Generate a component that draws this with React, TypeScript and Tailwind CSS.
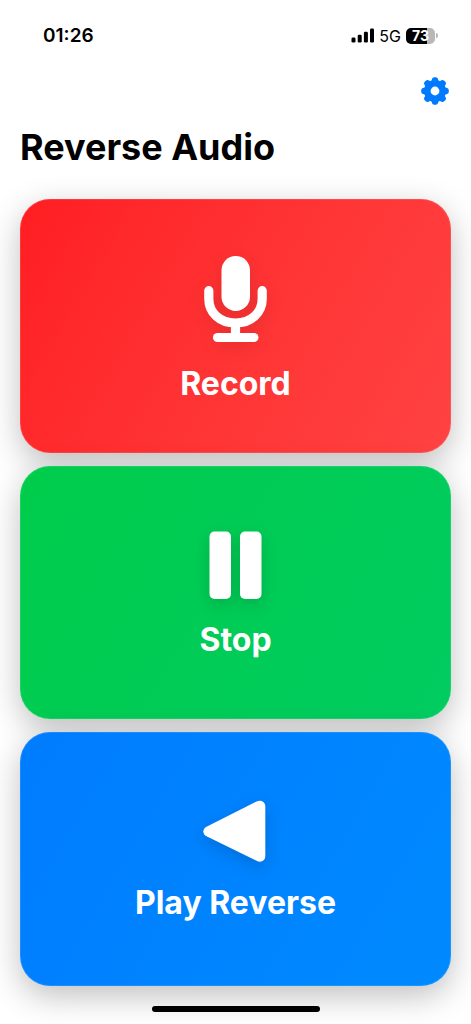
import type { ReactNode } from "react"
import clsx from "clsx"

interface ActionCardProps {
  label: string
  className: string
  children: ReactNode
}

function ActionCard({ label, className, children }: ActionCardProps) {
  return (
    <button
      type="button"
      className={clsx(
        "flex min-h-48 w-full flex-col items-center justify-center gap-3 rounded-[30px] bg-linear-120 text-white shadow-[0_10px_32px_rgba(0,0,0,0.25),inset_0_0_0_1px_rgba(255,255,255,0.1)]",
        className
      )}
    >
      {children}
      <span className="text-[32px] leading-10 font-bold">{label}</span>
    </button>
  )
}

function MicIcon() {
  return (
    <svg viewBox="0 0 64 104" className="h-[104px] w-16 overflow-visible drop-shadow-[0_5px_8px_rgba(0,0,0,0.1)]" fill="none" aria-hidden="true">
      <rect x="17.5" y="8" width="28.5" height="55" rx="14.2" fill="currentColor" />
      <path
        d="M4.8 42.7v8c0 14 11 24.3 26.7 24.3s26.7-10.3 26.7-24.3v-8M31.5 75v14"
        stroke="currentColor"
        strokeWidth="9.2"
        strokeLinecap="round"
      />
      <path d="M13.5 89.500h36.4" stroke="currentColor" strokeWidth="9.2" strokeLinecap="round" />
    </svg>
  )
}

function PauseIcon() {
  return (
    <svg viewBox="0 0 54 84" className="h-[84px] w-[54px] overflow-visible drop-shadow-[0_5px_8px_rgba(0,0,0,0.15)]" fill="currentColor" aria-hidden="true">
      <rect x="0.5" y="7.5" width="21.5" height="67.5" rx="5" />
      <rect x="31" y="7.5" width="21.5" height="67.5" rx="5" />
    </svg>
  )
}

function PlayReverseIcon() {
  return (
    <svg viewBox="0 0 64 76" className="h-[76px] w-16 overflow-visible drop-shadow-[0_5px_8px_rgba(0,0,0,0.15)]" fill="currentColor" aria-hidden="true">
      <path d="M3 31.5 52.500 6.600c4.500-2.200 8.800 0.300 8.800 5v49.200c0 5-4.300 7.200-8.800 5L3 41.500c-5-2.700-5-7.300 0-10Z" />
    </svg>
  )
}

const TEETH = [0, 45, 90, 135, 180, 225, 270, 315]

function GearIcon() {
  return (
    <svg viewBox="-14 -14 28 28" className="size-7" stroke="currentColor" fill="none" aria-hidden="true">
      <circle r="7.7" strokeWidth="6.6" />
      {TEETH.map((angle) => (
        <path key={angle} d="M-0.800-11.500h1.600L1.500-9h-3Z" strokeWidth="4.6" strokeLinejoin="round" transform={`rotate(${angle})`} />
      ))}
    </svg>
  )
}

function StatusBar() {
  return (
    <div className="flex h-[71px] items-center justify-between pr-[33px] pl-[43px]">
      <time className="text-[19px] leading-6 font-semibold">01:26</time>
      <div className="flex items-center gap-[5px]">
        <svg viewBox="0 0 24 16" className="h-4 w-6" fill="currentColor" aria-hidden="true">
          <rect x="1.5" y="9.5" width="4" height="5" rx="1.3" />
          <rect x="7.7" y="6.7" width="4" height="7.8" rx="1.3" />
          <rect x="13.9" y="3.7" width="4" height="10.8" rx="1.3" />
          <rect x="20" y="0.5" width="4" height="14" rx="1.3" />
        </svg>
        <span className="text-base leading-6">5G</span>
        <div className="flex items-center gap-px">
          <div className="flex h-4 w-[29px] items-center justify-center rounded-[5px] bg-linear-to-r from-black from-74% to-[#b8b8b8] to-74% text-sm leading-4 font-bold text-white">
            73
          </div>
          <div className="h-[5px] w-0.5 rounded-r-full bg-[#b8b8b8]" />
        </div>
      </div>
    </div>
  )
}

export default function App() {
  return (
    <div className="flex min-h-screen flex-col overflow-x-hidden bg-white font-['Inter',sans-serif] text-black">
      <StatusBar />
      <header className="px-5">
        <div className="flex h-10 items-center justify-end">
          <button type="button" aria-label="Settings" className="mr-0.5 text-[#007aff]">
            <GearIcon />
          </button>
        </div>
        <h1 className="pt-3 text-[36px] leading-12 font-bold">Reverse Audio</h1>
      </header>
      <main className="grid flex-1 auto-rows-fr gap-[13px] px-5 pt-7 pb-4">
        <ActionCard label="Record" className="from-[#ff1d22] to-[#ff4242]">
          <MicIcon />
        </ActionCard>
        <ActionCard label="Stop" className="from-[#00cc4b] to-[#00cc60]">
          <PauseIcon />
        </ActionCard>
        <ActionCard label="Play Reverse" className="from-[#007cff] to-[#008aff]">
          <PlayReverseIcon />
        </ActionCard>
      </main>
      <footer className="z-10 flex justify-center pt-1 pb-3">
        <div className="h-1.5 w-[168px] rounded-full bg-black" />
      </footer>
    </div>
  )
}
